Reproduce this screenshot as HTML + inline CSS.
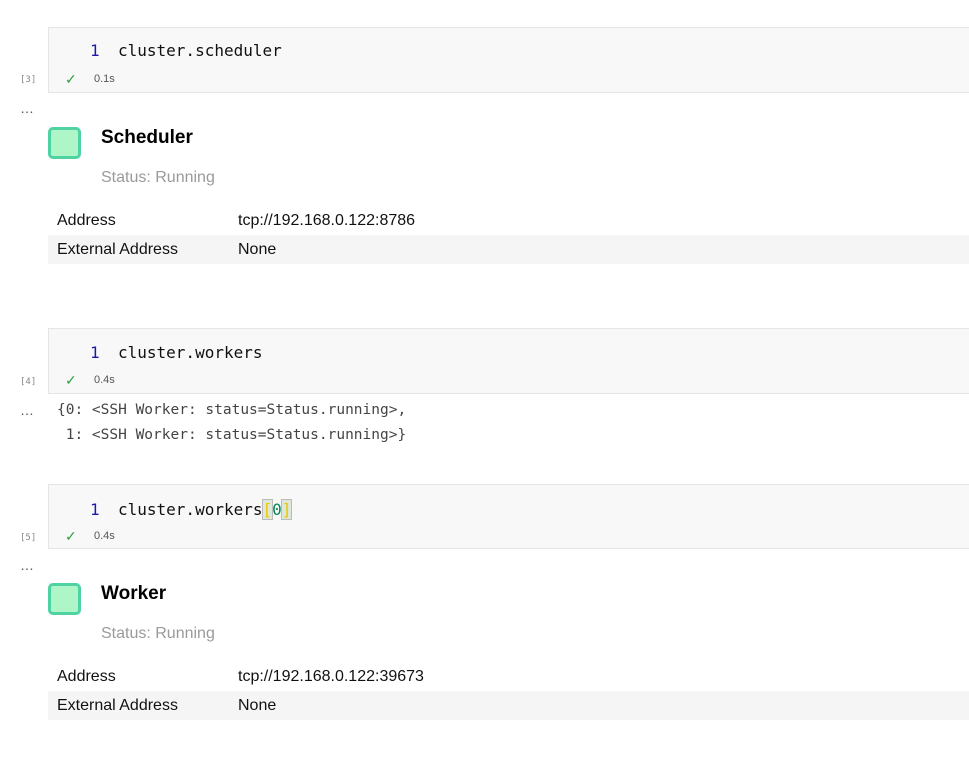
<!DOCTYPE html>
<html><head><style>
body{margin:0;width:969px;height:778px;background:#fff;position:relative;overflow:hidden;font-family:"Liberation Sans",sans-serif}
.a{position:absolute;white-space:pre}
.cell{position:absolute;left:48px;width:921px;height:64px;background:#f8f8f8;border:1px solid #e5e5e5;border-right:none;box-sizing:border-box}
.mono{font-family:"DejaVu Sans Mono","Liberation Mono",monospace}
.ln{color:#1a1aa6;font-size:16px}
.code{font-size:16px;color:#111}
.small{font-size:11px;color:#555}
.cnt{font-size:9px;color:#888}
.chk{color:#2ea043;font-size:14px}
.sq{position:absolute;left:48px;width:33px;height:32px;background:#aef5c8;border:3px solid #4fd3a3;border-radius:5px;box-sizing:border-box}
.h{font-size:19px;font-weight:bold;color:#000}
.st{font-size:16px;color:#9a9a9a}
.row{position:absolute;left:48px;width:921px;height:29px;font-size:16px;color:#111}
.row span{position:absolute;top:6px}
.out{font-size:14.5px;color:#444;line-height:25px}
</style></head><body>
<div class="cell" style="top:27px;height:66px"></div>
<div class="a mono ln" style="left:90px;top:41px">1</div>
<div class="a mono code" style="left:118px;top:41px">cluster.scheduler</div>
<div class="a mono cnt" style="left:20px;top:75px">[3]</div>
<div class="a chk" style="left:65px;top:71px">✓</div>
<div class="a small" style="left:94px;top:73px">0.1s</div>
<div class="a" style="left:20px;top:100px;font-size:14px;color:#555">…</div>
<div class="sq" style="top:127px"></div>
<div class="a h" style="left:101px;top:127px">Scheduler</div>
<div class="a st" style="left:101px;top:169px">Status: Running</div>
<div class="row" style="top:206px"><span style="left:9px">Address</span><span style="left:190px">tcp://192.168.0.122:8786</span></div>
<div class="row" style="top:235px;background:#f5f5f5"><span style="left:9px">External Address</span><span style="left:190px">None</span></div>

<div class="cell" style="top:328px;height:66px"></div>
<div class="a mono ln" style="left:90px;top:343px">1</div>
<div class="a mono code" style="left:118px;top:343px">cluster.workers</div>
<div class="a mono cnt" style="left:20px;top:377px">[4]</div>
<div class="a chk" style="left:65px;top:372px">✓</div>
<div class="a small" style="left:94px;top:374px">0.4s</div>
<div class="a" style="left:20px;top:402px;font-size:14px;color:#555">…</div>
<div class="a mono out" style="left:57px;top:398px">{0: &lt;SSH Worker: status=Status.running&gt;,
 1: &lt;SSH Worker: status=Status.running&gt;}</div>

<div class="cell" style="top:484px;height:65px"></div>
<div class="a mono ln" style="left:90px;top:500px">1</div>
<div class="a mono code" style="left:118px;top:500px">cluster.workers<span style="background:#dfe8d8;outline:1px solid #bbb;color:#e8c800">[</span><span style="color:#098658">0</span><span style="background:#dfe8d8;outline:1px solid #bbb;color:#e8c800">]</span></div>
<div class="a mono cnt" style="left:20px;top:533px">[5]</div>
<div class="a chk" style="left:65px;top:528px">✓</div>
<div class="a small" style="left:94px;top:530px">0.4s</div>
<div class="a" style="left:20px;top:557px;font-size:14px;color:#555">…</div>
<div class="sq" style="top:583px"></div>
<div class="a h" style="left:101px;top:583px">Worker</div>
<div class="a st" style="left:101px;top:625px">Status: Running</div>
<div class="row" style="top:662px"><span style="left:9px">Address</span><span style="left:190px">tcp://192.168.0.122:39673</span></div>
<div class="row" style="top:691px;background:#f5f5f5"><span style="left:9px">External Address</span><span style="left:190px">None</span></div>
</body></html>
